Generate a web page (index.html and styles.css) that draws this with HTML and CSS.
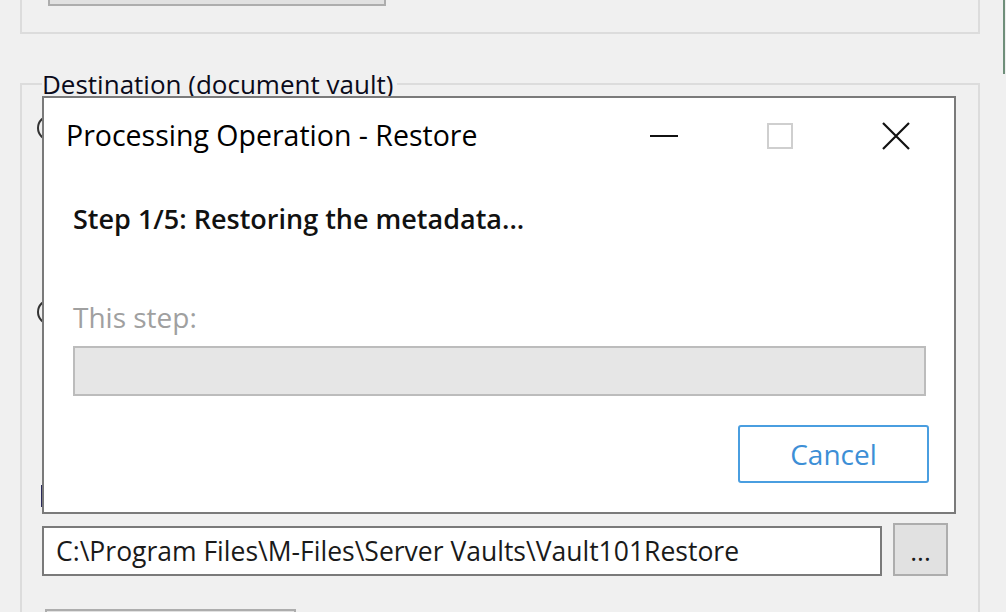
FILE: index.html
```html
<!DOCTYPE html>
<html lang="en">
<head>
	<meta charset="UTF-8">
	<title>Restore Vault</title>
	<link rel="stylesheet" href="styles.css">
</head>
<body>
	<div id="main">
		<div class="group group-top">
			<div class="btn-top"></div>
		</div>

		<fieldset class="group group-dest">
			<legend>Destination (document vault)</legend>
			<div class="radio radio-1"></div>
			<div class="radio radio-2"></div>
			<div class="label-stub"></div>
			<div class="path-row">
				<div class="path-input">C:\Program Files\M-Files\Server Vaults\Vault101Restore</div>
				<div class="btn-browse">...</div>
			</div>
			<div class="btn-bottom"></div>
		</fieldset>

		<div class="edge-line"></div>

		<!-- progress dialog over the page -->
		<div id="dialog">
			<div class="title-bar">
				<span class="title">Processing Operation - Restore</span>
				<div class="caption-btns">
					<span class="cap-btn">
						<svg width="28" height="4" viewBox="0 0 28 4"><rect x="0" y="1" width="28" height="2" fill="#111"/></svg>
					</span>
					<span class="cap-btn">
						<svg width="26" height="26" viewBox="0 0 26 26"><rect x="1" y="1" width="24" height="24" fill="none" stroke="#cfcfcf" stroke-width="2"/></svg>
					</span>
					<span class="cap-btn">
						<svg width="28" height="28" viewBox="0 0 28 28"><path d="M1 1 L27 27 M27 1 L1 27" stroke="#111" stroke-width="2.2" fill="none"/></svg>
					</span>
				</div>
			</div>
			<div class="dlg-body">
				<p class="step">Step 1/5: Restoring the metadata...</p>
				<p class="this-step">This step:</p>
				<div class="progress"></div>
				<div class="dlg-foot">
					<button class="btn-cancel">Cancel</button>
				</div>
			</div>
		</div>
	</div>
</body>
</html>
```

FILE: styles.css
```css
*{margin: 0;padding: 0;box-sizing: border-box;}
body{
	background: #f0f0f0;
	font-family: "Open Sans", "Noto Sans", sans-serif;
	font-size: 26px;
	color: #1a1a1a;
	overflow: hidden;
}
#main{
	position: relative;
	width: 1006px;
	height: 612px;
	padding: 0 26px 0 20px;
	overflow: hidden;
}
.group{
	border: 2px solid #dcdcdc;
}
.group-top{
	height: 34px;
	border-top: none;
	padding-left: 26px;
}
.btn-top{
	width: 338px;
	height: 6px;
	background: #e1e1e1;
	border: 2px solid #adadad;
	border-top: none;
}
.group-dest{
	margin-top: 38px;
	height: 580px;
	padding: 0 0 0 20px;
	min-width: 0;
}
.group-dest legend{
	padding: 0 4px 0 0;
	line-height: 24px;
	font-size: 26px;
	color: #0a0a1a;
}
.radio{
	width: 26px;
	height: 26px;
	border: 2px solid #333;
	border-radius: 50%;
	margin-left: -5px;
}
.radio-1{margin-top: 19px;}
.radio-2{margin-top: 158px;}
.label-stub{
	width: 2px;
	height: 22px;
	background: #2a2a5a;
	margin: 160px 0 0 -1px;
}
.path-row{
	display: flex;
	gap: 11px;
	margin-top: 19px;
}
.path-input{
	width: 840px;
	height: 50px;
	background: #fff;
	border: 2px solid #7a7a7a;
	padding-left: 12px;
	font-size: 26.5px;
	line-height: 46px;
	white-space: nowrap;
	overflow: hidden;
}
.btn-browse{
	width: 55px;
	height: 53px;
	margin-top: -3px;
	background: #e1e1e1;
	border: 2px solid #adadad;
	text-align: center;
	line-height: 52px;
}
.btn-bottom{
	width: 251px;
	height: 30px;
	margin: 33px 0 0 3px;
	background: #e1e1e1;
	border: 2px solid #adadad;
}
.edge-line{
	position: absolute;
	right: 1px;
	top: 0;
	width: 2px;
	height: 74px;
	background: #6f8f7a;
}
#dialog{
	position: absolute;
	left: 42px;
	top: 96px;
	width: 914px;
	height: 418px;
	background: #fff;
	border: 2px solid #7a7a7a;
}
.title-bar{
	display: flex;
	align-items: center;
	justify-content: space-between;
	height: 76px;
	padding: 0 0 0 22px;
}
.title{
	font-size: 28.5px;
	line-height: 34px;
	margin-top: -3px;
	color: #000;
}
.caption-btns{
	display: flex;
}
.cap-btn{
	display: flex;
	align-items: center;
	justify-content: center;
	width: 116px;
	height: 76px;
}
.dlg-body{
	padding: 0 28px 0 29px;
}
.step{
	font-weight: 600;
	font-size: 27px;
	line-height: 30px;
	margin-top: 30px;
	color: #111;
}
.this-step{
	color: #a0a0a0;
	font-size: 28px;
	line-height: 30px;
	margin-top: 68px;
}
.progress{
	height: 50px;
	margin-top: 14px;
	background: #e6e6e6;
	border: 2px solid #bcbcbc;
}
.dlg-foot{
	display: flex;
	justify-content: flex-end;
	margin-top: 29px;
}
.btn-cancel{
	width: 191px;
	height: 58px;
	margin-right: -3px;
	background: #fff;
	border: 2px solid #4a9ee0;
	border-radius: 3px;
	font-family: inherit;
	font-size: 28px;
	color: #3d8fd6;
}
```
